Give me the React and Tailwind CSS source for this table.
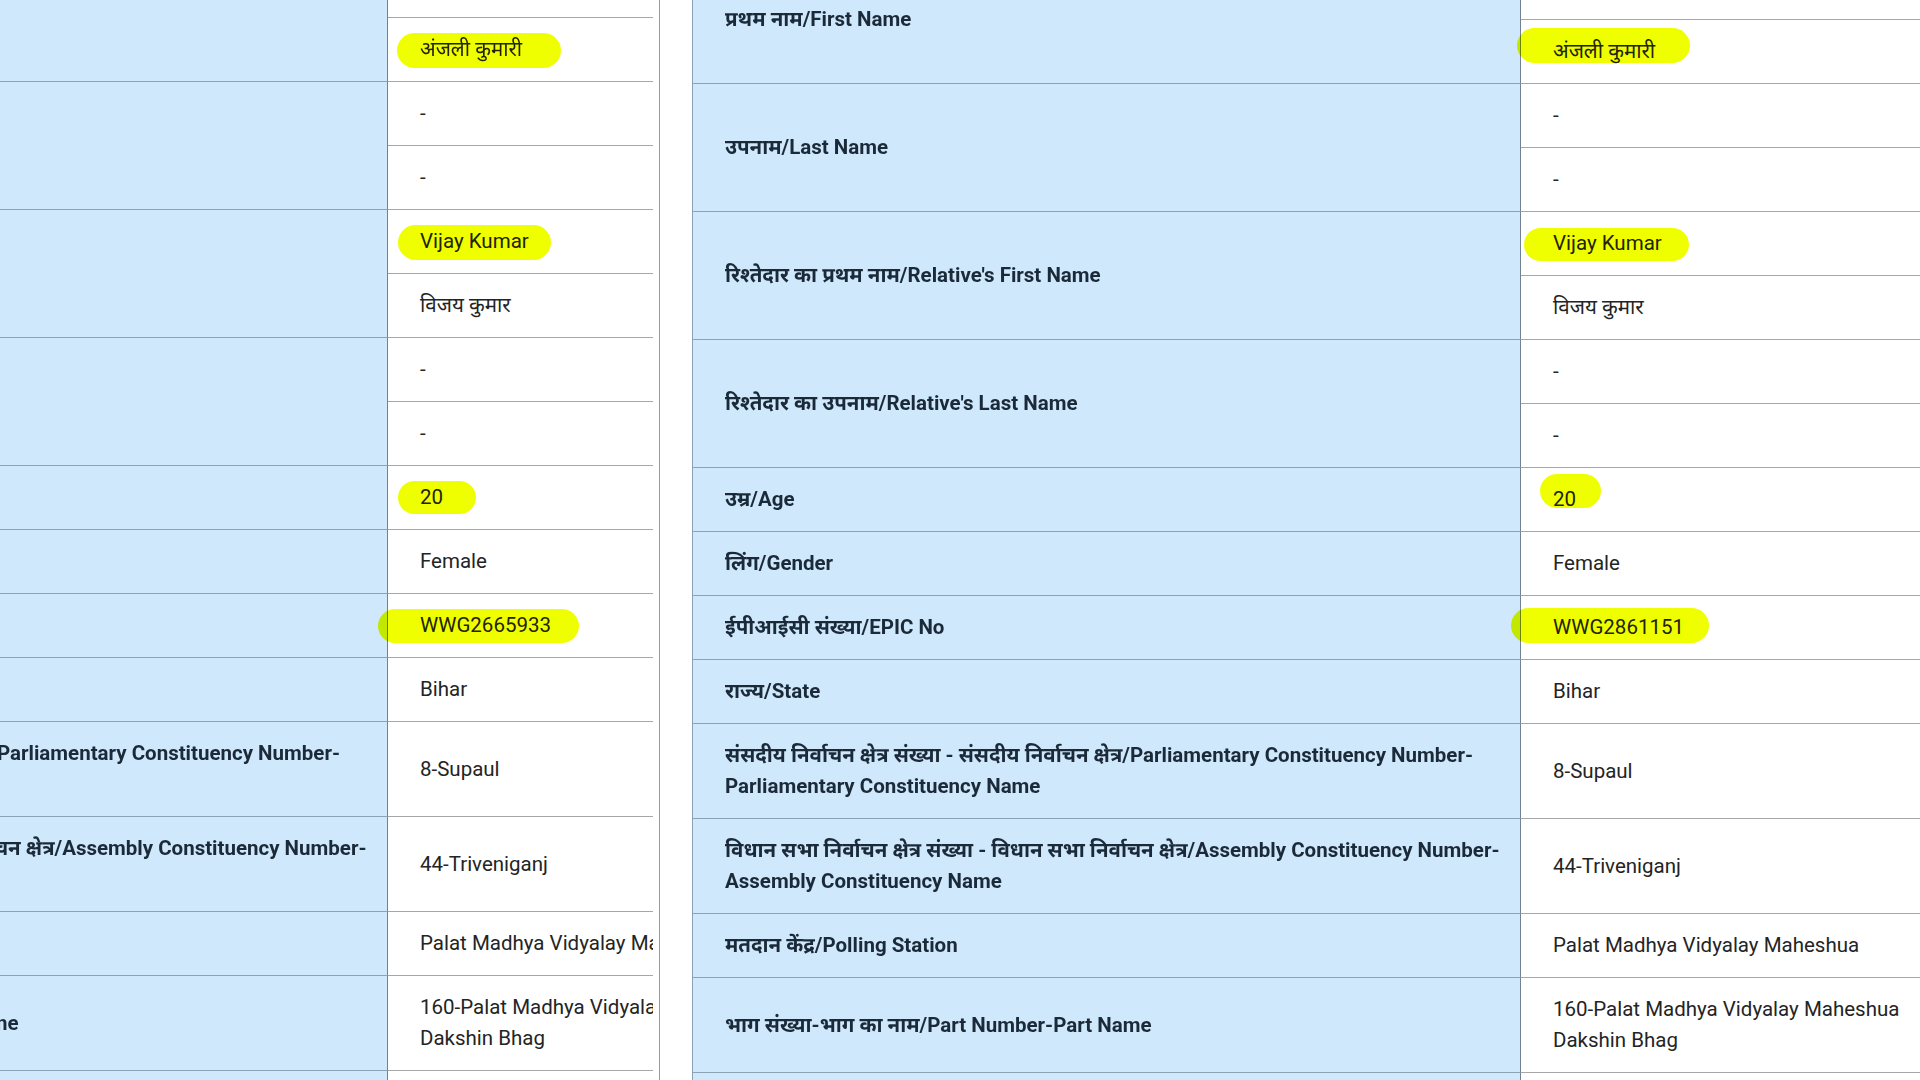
import React from "react";

const rowsFor = (epic, hls) => [
  {
    label: "प्रथम नाम/First Name",
    values: [{ t: "Anjali Kumari" }, { t: "अंजली कुमारी", hl: hls.name }],
  },
  { label: "उपनाम/Last Name", values: [{ t: "-" }, { t: "-" }] },
  {
    label: "रिश्तेदार का प्रथम नाम/Relative's First Name",
    values: [{ t: "Vijay Kumar", hl: hls.rel }, { t: "विजय कुमार" }],
  },
  { label: "रिश्तेदार का उपनाम/Relative's Last Name", values: [{ t: "-" }, { t: "-" }] },
  { label: "उम्र/Age", values: [{ t: "20", hl: hls.age }] },
  { label: "लिंग/Gender", values: [{ t: "Female" }] },
  { label: "ईपीआईसी संख्या/EPIC No", values: [{ t: epic, hl: hls.epic }] },
  { label: "राज्य/State", values: [{ t: "Bihar" }] },
  {
    label: (
      <>
        <span className="whitespace-nowrap">
          संसदीय निर्वाचन क्षेत्र संख्या - संसदीय निर्वाचन क्षेत्र/Parliamentary Constituency Number-
        </span>
        <br />
        Parliamentary Constituency Name
      </>
    ),
    values: [{ t: "8-Supaul" }],
  },
  {
    label: (
      <>
        <span className="whitespace-nowrap">
          विधान सभा निर्वाचन क्षेत्र संख्या - विधान सभा निर्वाचन क्षेत्र/Assembly Constituency Number-
        </span>
        <br />
        Assembly Constituency Name
      </>
    ),
    values: [{ t: "44-Triveniganj" }],
  },
  { label: "मतदान केंद्र/Polling Station", values: [{ t: "Palat Madhya Vidyalay Maheshua" }] },
  {
    label: "भाग संख्या-भाग का नाम/Part Number-Part Name",
    values: [
      {
        t: (
          <>
            160-Palat Madhya Vidyalay Maheshua
            <br />
            Dakshin Bhag
          </>
        ),
      },
    ],
  },
  { label: "भाग क्रमांक/Serial Number", values: [{ t: "412" }] },
];

const leftRows = rowsFor("WWG2665933", {
  name: "left-[9px] top-[15px] w-[164px] h-[35px]",
  rel: "left-[10px] top-[15px] w-[153px] h-[35px]",
  age: "left-[10px] top-[15px] w-[78px] h-[33px]",
  epic: "left-[-10px] top-[15px] w-[201px] h-[34px]",
});

const rightRows = rowsFor("WWG2861151", {
  name: "left-[-4px] top-[8px] w-[173px] h-[35px]",
  rel: "left-[3px] top-[16px] w-[165px] h-[33px]",
  age: "left-[19px] top-[6px] w-[61px] h-[34px]",
  epic: "left-[-10px] top-[12px] w-[198px] h-[35px]",
});

function Table({ rows }) {
  return (
    <div className="flex w-[1295px] flex-col">
      {rows.map((row, i) => (
        <div key={i} className="flex">
          <div className="flex w-[829px] shrink-0 items-center overflow-hidden border-b border-l border-r border-b-[#8ea2b6] border-l-[#8ea2b6] border-r-[#72818f] bg-[#d0e8fc] py-4 pl-8 pr-2 text-[20.5px] font-bold leading-[31px] text-[#1b2a39]">
            <div>{row.label}</div>
          </div>
          <div className="flex w-[466px] shrink-0 flex-col">
            {row.values.map((v, j) => (
              <div
                key={j}
                className="relative flex flex-1 items-center border-b border-[#a7a7a7] bg-white px-8 py-4 text-[20.5px] leading-[31px] text-[#242424]"
              >
                <div className="whitespace-nowrap">{v.t}</div>
                {v.hl && (
                  <span
                    className={`pointer-events-none absolute rounded-full bg-[#f0ff00] mix-blend-multiply ${v.hl}`}
                  />
                )}
              </div>
            ))}
          </div>
        </div>
      ))}
    </div>
  );
}

export default function App() {
  return (
    <div className="h-screen w-screen overflow-hidden bg-white font-['Roboto','Noto_Sans_Devanagari','Noto_Sans',sans-serif]">
      <div className="flex items-start">
        <div className="ml-[-441px] mt-[-46px] w-[1101px] shrink-0 border-r border-[#9a9a9a] pr-[6px]">
          <div className="overflow-hidden">
            <Table rows={leftRows} />
          </div>
        </div>
        <div className="ml-[32px] mt-[-44px] shrink-0">
          <Table rows={rightRows} />
        </div>
      </div>
    </div>
  );
}
